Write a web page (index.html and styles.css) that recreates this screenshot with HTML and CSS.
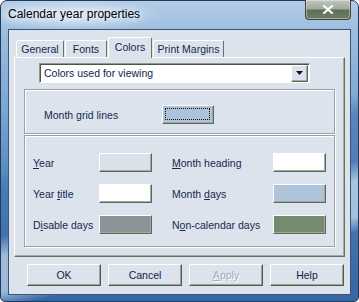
FILE: index.html
```html
<!DOCTYPE html>
<html lang="en">
<head>
	<meta charset="UTF-8">
	<title>Calendar year properties</title>
	<link rel="stylesheet" href="styles.css">
</head>
<body>
	<div class="window">
		<div class="titlebar">
			<span class="title">Calendar year properties</span>
			<span class="close">
				<svg width="10" height="9" viewBox="0 0 10 9"><path d="M1 1 L9 8 M9 1 L1 8" stroke="#fff" stroke-width="2.2" stroke-linecap="square"/></svg>
			</span>
		</div>
		<div class="client">
			<!-- 选项卡 -->
			<div class="tabs">
				<div class="tab t-general">General</div>
				<div class="tab t-fonts">Fonts</div>
				<div class="tab t-colors active">Colors</div>
				<div class="tab t-print">Print Margins</div>
			</div>
			<div class="panel">
				<div class="combo">
					<span class="combo-text">Colors used for viewing</span>
					<span class="drop">
						<svg width="7" height="4" viewBox="0 0 7 4"><polygon points="0,0 7,0 3.5,4" fill="#111"/></svg>
					</span>
				</div>
				<div class="group group-grid">
					<span class="grid-label">Month <u>g</u>rid lines</span>
					<span class="swatch sw-grid"><span class="focus"></span></span>
				</div>
				<div class="group group-colors">
					<span><u>Y</u>ear</span>
					<span class="swatch sw-year"></span>
					<span></span>
					<span><u>M</u>onth heading</span>
					<span class="swatch sw-white"></span>

					<span>Year <u>t</u>itle</span>
					<span class="swatch sw-white"></span>
					<span></span>
					<span>Month <u>d</u>ays</span>
					<span class="swatch sw-days"></span>

					<span>D<u>i</u>sable days</span>
					<span class="swatch sw-disable"></span>
					<span></span>
					<span>N<u>o</u>n-calendar days</span>
					<span class="swatch sw-noncal"></span>
				</div>
			</div>
			<div class="buttons">
				<span class="btn">OK</span>
				<span class="btn">Cancel</span>
				<span class="btn disabled"><u>A</u>pply</span>
				<span class="btn">Help</span>
			</div>
		</div>
	</div>
</body>
</html>
```

FILE: styles.css
```css
*{margin:0;padding:0;box-sizing:border-box;}
body{width:359px;height:302px;overflow:hidden;background:#fff;font-family:"Liberation Sans",Arial,sans-serif;font-size:10.5px;color:#15294e;}
u{text-decoration:underline;text-underline-offset:1px;}

/* 窗口外框 */
.window{width:359px;height:302px;display:flex;flex-direction:column;padding:0 7px 6px 7px;border:1px solid #22395a;border-radius:7px 7px 5px 5px;
	background:
		radial-gradient(ellipse 95px 16px at 70px 14px, rgba(228,238,248,.95), rgba(228,238,248,0)),
		linear-gradient(168deg, rgba(255,255,255,0) 0 165px, rgba(70,115,170,.6) 185px 230px, rgba(195,216,236,.75) 250px 285px, rgba(70,115,170,.55) 300px),
		linear-gradient(180deg, #b3cce6 0, #9ebfe0 28px, #79a5d2 110px, #4a7fba 200px, #22579a 302px);}
.titlebar{height:28px;display:flex;align-items:flex-start;}
.title{font-size:12px;line-height:14px;color:#000;margin-top:6px;text-shadow:0 0 5px #eef4fa,0 0 9px #eef4fa;}
.close{margin-left:auto;margin-top:-1px;width:46px;height:20px;display:flex;align-items:center;justify-content:center;border:1px solid #3b4a3a;border-top:none;border-radius:0 0 4px 4px;
	background:linear-gradient(180deg,#c0c7bd 0,#a2ab9e 45%,#5e6e58 55%,#6f7f69 100%);box-shadow:inset 0 0 0 1px rgba(255,255,255,.35);}

/* 客户区 */
.client{flex:1;display:flex;flex-direction:column;border:1px solid #3e5472;background:#dce3ec;padding:7px 5px 0 5px;}

.tabs{display:flex;align-items:flex-end;height:20px;padding-left:2px;position:relative;z-index:1;}
.tab{height:17px;line-height:16px;text-align:center;border:1px solid;border-color:#fff #66745f transparent #fff;border-bottom:none;border-radius:2px 2px 0 0;margin-right:1px;}
.tab.active{height:21px;margin-bottom:-1px;background:#dce3ec;line-height:18px;}
.t-general{width:48px;}
.t-fonts{width:42px;}
.t-colors{width:44px;}
.t-print{width:71px;}

.panel{height:200px;border:1px solid;border-color:#fff #66745f #66745f #fff;box-shadow:inset -1px -1px 0 #a4ada2;padding:5px 9px 0 9px;}

.combo{width:271px;height:20px;margin-left:15px;display:flex;align-items:center;background:#fff;border:1px solid;border-color:#8e9a8c #fff #fff #8e9a8c;box-shadow:inset 1px 1px 0 #4b5548;padding:0 1px 0 4px;}
.combo-text{flex:1;color:#0d1f44;}
.drop{width:17px;height:17px;display:flex;align-items:center;justify-content:center;background:#dce3ec;border:1px solid;border-color:#fff #5b6a58 #5b6a58 #fff;box-shadow:inset -1px -1px 0 #a0aa9e;}

.group{border:1px solid #97a1ac;box-shadow:inset 1px 1px 0 #fff,1px 1px 0 #fff;}
.group-grid{height:45px;margin-top:6px;display:flex;align-items:center;padding:6px 0 0 19px;}
.grid-label{width:118px;}
.group-colors{height:112px;margin-top:1px;display:grid;grid-template-columns:66px 53px 20px 101px 53px;grid-auto-rows:19px;row-gap:12px;align-items:center;padding:17px 0 0 8px;}

.swatch{display:block;height:19px;border:1px solid;border-color:#fff #5b6a58 #5b6a58 #fff;box-shadow:inset -1px -1px 0 #a0aa9e;}
.sw-grid{width:52px;background:#adc3da;padding:2px 3px 3px 2px;}
.focus{display:block;height:100%;border:1px dotted #111;}
.sw-year{background:#dae1ea;}
.sw-white{background:#fff;}
.sw-days{background:#adc4da;}
.sw-disable{background:#8d9297;}
.sw-noncal{background:#768a70;}

/* 底部按钮 */
.buttons{display:flex;gap:7px;padding:7px 0 0 13px;}
.btn{width:74px;height:22px;display:flex;align-items:center;justify-content:center;color:#0d1f44;background:#dce3ec;border:1px solid;border-color:#fff #4f5e4c #4f5e4c #fff;box-shadow:inset -1px -1px 0 #9aa598;}
.btn.disabled{color:#a3acb8;text-shadow:1px 1px 0 #fff;}
```
